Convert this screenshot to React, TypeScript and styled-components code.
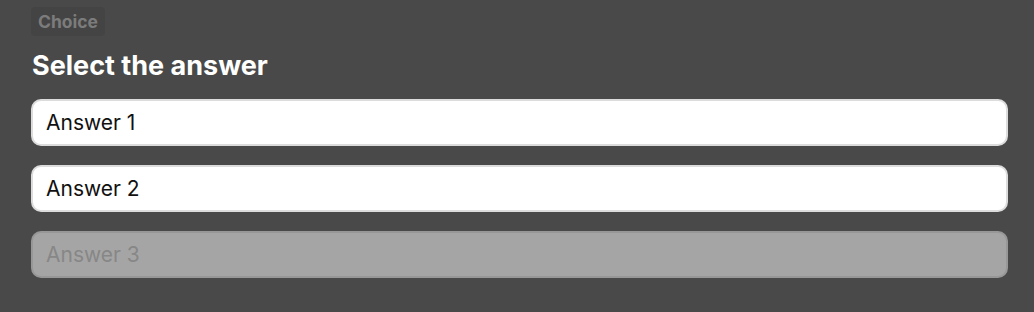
import styled, { createGlobalStyle } from "styled-components";

const GlobalStyle = createGlobalStyle`
  html, body {
    margin: 0;
    background: #494949;
    font-family: Inter, "Noto Sans", sans-serif;
  }
`;

const Page = styled.div`
  padding: 7px 26px 0 31px;
  display: flex;
  flex-direction: column;
`;

const Badge = styled.span`
  align-self: flex-start;
  background: #444444;
  color: #7c7c7c;
  font-size: 17.5px;
  font-weight: 700;
  line-height: 29px;
  padding: 0 7px;
  border-radius: 4px;
`;

const Title = styled.h2`
  margin: 13px 0 0 1px;
  color: #ffffff;
  font-size: 27px;
  font-weight: 700;
  line-height: 34px;
`;

const Answers = styled.div`
  margin-top: 16px;
  display: flex;
  flex-direction: column;
  gap: 19px;
`;

const Answer = styled.div<{ $disabled?: boolean }>`
  height: 43px;
  box-sizing: content-box;
  display: flex;
  align-items: center;
  padding: 0 13px;
  border: 2px solid ${(p) => (p.$disabled ? "#979797" : "#dcdcdc")};
  border-radius: 10px;
  background: ${(p) => (p.$disabled ? "#a5a5a5" : "#ffffff")};
  color: ${(p) => (p.$disabled ? "#878787" : "#111111")};
  font-size: 21px;
  font-weight: 400;
`;

const answers = [
  { label: "Answer 1" },
  { label: "Answer 2" },
  { label: "Answer 3", disabled: true },
];

export default function App() {
  return (
    <>
      <GlobalStyle />
      <Page>
        <Badge>Choice</Badge>
        <Title>Select the answer</Title>
        <Answers>
          {answers.map((a) => (
            <Answer key={a.label} $disabled={a.disabled}>
              {a.label}
            </Answer>
          ))}
        </Answers>
      </Page>
    </>
  );
}
